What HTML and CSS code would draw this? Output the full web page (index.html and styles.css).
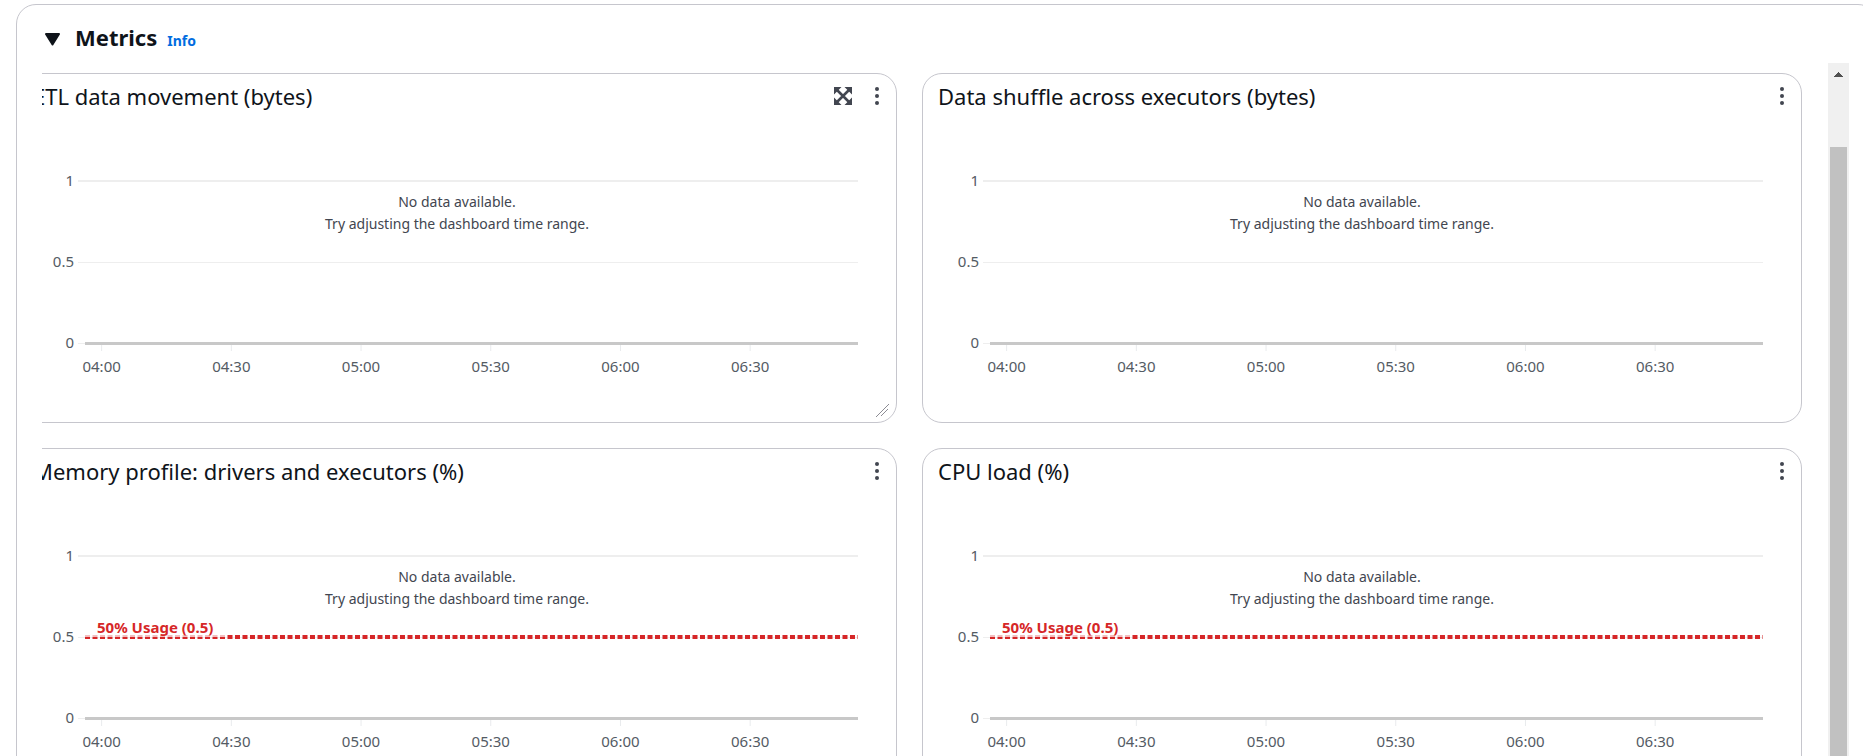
FILE: index.html
```html
<!DOCTYPE html>
<html lang="en">
<head>
<meta charset="utf-8">
<title>Metrics</title>
<link rel="stylesheet" href="styles.css">
</head>
<body>
<main class="panel">
  <header class="panel-header">
    <button class="toggle" type="button" aria-label="Collapse metrics" aria-expanded="true">
      <svg width="15" height="13" viewBox="0 0 15 13"><path d="M1 1h13L7.500 11.500z" fill="#0f141a" stroke="#0f141a" stroke-width="2" stroke-linejoin="round"/></svg>
    </button>
    <h1 class="panel-title">Metrics</h1>
    <a class="info" href="#info">Info</a>
  </header>
  <div class="scroller">
    <div class="viewport">
      <div class="widgets" id="widgets"></div>
    </div>
    <div class="scrollbar">
      <svg class="arrow" width="9" height="5" viewBox="0 0 9 5" shape-rendering="crispEdges"><path d="M4 0h1v1h1v1h1v1h1v1h1v1H0V4h1V3h1V2h1V1h1z" fill="#505050"/></svg>
      <div class="thumb"></div>
    </div>
  </div>
</main>
<script src="charts.js"></script>
</body>
</html>
```
FILE: styles.css
```css
* {
  box-sizing: border-box;
}

body {
  margin: 0;
  height: 100vh;
  overflow: hidden;
  background: #fff;
  color: #0f141a;
  font-family: "Noto Sans", "Open Sans", sans-serif;
}

.panel {
  margin: 4px -15px 0 16px;
  padding: 0 28px 0 25px;
  border: 1px solid #c6c6cd;
  border-radius: 20px;
}

.panel-header {
  display: flex;
  align-items: baseline;
  height: 58px;
  padding: 16px 0 0 3px;
}

.toggle {
  padding: 0;
  border: 0;
  background: none;
  line-height: 0;
}

.panel-title {
  margin: 0 10px 0 15px;
  font-size: 22px;
  line-height: 32px;
}

.info {
  color: #006ce0;
  font-size: 14px;
  font-weight: 700;
  text-decoration: none;
}

.scroller {
  display: flex;
}

.viewport {
  flex: 1;
  min-width: 0;
  padding: 10px 26px 0 0;
  overflow: hidden;
}

.widgets {
  display: grid;
  grid-template-columns: 1fr 1fr;
  gap: 25px;
  margin-left: -25px;
}

.card {
  display: flex;
  flex-direction: column;
  height: 350px;
  border: 1px solid #c6c6cd;
  border-radius: 20px;
}

.card-header {
  display: flex;
  align-items: center;
  height: 44px;
  padding: 0 17px 0 15px;
}

.card-title {
  flex: 1;
  margin: 0;
  font-size: 22px;
  font-weight: 400;
  line-height: 28px;
}

.icon-button {
  padding: 0;
  border: 0;
  background: none;
  line-height: 0;
}

.expand {
  margin-right: 23px;
}

.chart-area {
  display: grid;
  flex: 1;
  padding-top: 62px;
}

.plot-box {
  grid-area: 1 / 1;
  padding: 0 38px 0 67px;
}

.plot {
  display: block;
  width: 100%;
  height: 196px;
  overflow: visible;
}

.tick-label {
  fill: #545b64;
  font-size: 15px;
}

.threshold-label {
  fill: #d62728;
  font-size: 15px;
  font-weight: 700;
}

.empty {
  grid-area: 1 / 1;
  justify-self: center;
  margin: 11px 0 0;
  color: #424650;
  font-size: 14px;
  line-height: 22px;
  text-align: center;
}

.resize {
  align-self: flex-end;
  margin: 0 6px 5px 0;
}

.scrollbar {
  display: flex;
  flex-direction: column;
  width: 21px;
  padding: 9px 2px 0;
  background: #f0f0f0;
}

.arrow {
  align-self: center;
}

.thumb {
  flex: 1;
  margin-top: 70px;
  background: #c1c1c1;
}
```
FILE: charts.js
```js
const times = ["04:00", "04:30", "05:00", "05:30", "06:00", "06:30"];
const cards = [
  { title: "ETL data movement (bytes)", active: true },
  { title: "Data shuffle across executors (bytes)" },
  { title: "Memory profile: drivers and executors (%)", threshold: true },
  { title: "CPU load (%)", threshold: true }
];

const expandIcon = `<button class="icon-button expand" type="button" aria-label="Enlarge">
  <svg width="18" height="18" viewBox="0 0 18 18" fill="#424650">
    <path d="M0 0h7.500L0 7.500zM18 0v7.500L10.500 0zM18 18h-7.500L18 10.500zM0 18v-7.500L7.500 18z"/>
    <path d="M3 3l12 12M15 3L3 15" stroke="#424650" stroke-width="2.600"/>
  </svg></button>`;
const menuIcon = `<button class="icon-button" type="button" aria-label="Widget actions">
  <svg width="4" height="18" viewBox="0 0 4 18" fill="#424650"><circle cx="2" cy="2" r="2"/><circle cx="2" cy="9" r="2"/><circle cx="2" cy="16" r="2"/></svg></button>`;
const resizeIcon = `<svg class="resize" width="14" height="14" viewBox="0 0 14 14" stroke="#8c8c94" stroke-width="1"><path d="M0 14L13 1M5 13l7-7"/></svg>`;

function plot(card) {
  const ticks = times.map((t, i) => {
    const x = (2.150 + i * 16.780).toFixed(2) + "%";
    return `<line x1="${x}" x2="${x}" y1="165" y2="171" stroke="#e9ebed"/>
      <text class="tick-label" x="${x}" y="192" text-anchor="middle">${t}</text>`;
  }).join("");
  const threshold = card.threshold ? `
    <line x1="0" x2="100%" y1="82" y2="82" stroke="#d62728" stroke-width="4" stroke-dasharray="5 2.500"/>
    <rect x="0" y="62" width="140" height="20" fill="#fff" fill-opacity="0.700"/>
    <text class="threshold-label" x="12" y="78">50% Usage (0.5)</text>` : "";
  return `<svg class="plot">
    <rect x="-7" y="0" width="7" height="2" fill="#eee"/><rect y="0" width="100%" height="2" fill="#eee"/>
    <rect x="-7" y="82" width="7" height="1" fill="#eee"/><rect y="82" width="100%" height="1" fill="#eee"/>
    <rect x="-7" y="163" width="7" height="1" fill="#eee"/><rect y="162" width="100%" height="3" fill="#c8c8c8"/>
    <text class="tick-label" x="-11" y="6" text-anchor="end">1</text>
    <text class="tick-label" x="-11" y="87" text-anchor="end">0.5</text>
    <text class="tick-label" x="-11" y="168" text-anchor="end">0</text>
    ${ticks}${threshold}
  </svg>`;
}

document.getElementById("widgets").innerHTML = cards.map(card => `
  <section class="card">
    <header class="card-header"><h2 class="card-title">${card.title}</h2>${card.active ? expandIcon : ""}${menuIcon}</header>
    <div class="chart-area">
      <div class="plot-box">${plot(card)}</div>
      <p class="empty">No data available.<br>Try adjusting the dashboard time range.</p>
    </div>
    ${card.active ? resizeIcon : ""}
  </section>`).join("");
```
